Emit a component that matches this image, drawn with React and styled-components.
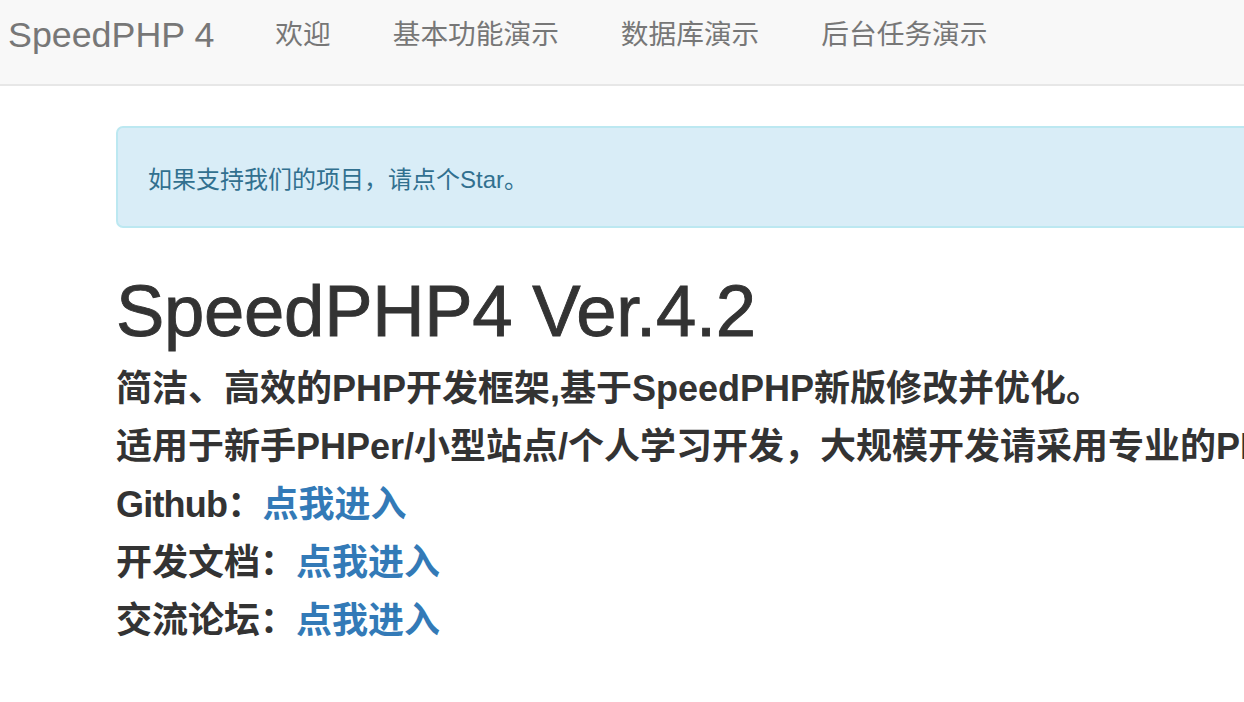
import React from "react";
import styled, { createGlobalStyle } from "styled-components";

const GlobalStyle = createGlobalStyle`
  html, body {
    margin: 0;
    padding: 0;
    background: #ffffff;
    overflow: hidden;
  }
  body {
    font-family: "Liberation Sans", "Noto Sans CJK SC", sans-serif;
    color: #333333;
  }
`;

const Navbar = styled.nav`
  display: flex;
  align-items: flex-start;
  height: 84px;
  padding-left: 8px;
  background: #f8f8f8;
  border-bottom: 2px solid #e7e7e7;
`;

const Brand = styled.a`
  font-size: 35.8px;
  line-height: 70px;
  color: #777777;
  padding-right: 30px;
  text-decoration: none;
  white-space: nowrap;
`;

const NavLink = styled.a`
  font-size: 27.7px;
  line-height: 70px;
  color: #777777;
  padding: 0 31px;
  text-decoration: none;
  white-space: nowrap;
`;

const Container = styled.main`
  width: 2000px;
  padding-left: 116px;
`;

const Alert = styled.div`
  margin-top: 40px;
  padding: 6px 30px 0;
  background: #d9edf7;
  border: 2px solid #bce8f1;
  border-radius: 7px;
  color: #31708f;
  font-size: 24px;
  line-height: 92px;
  white-space: nowrap;
`;

const Title = styled.h1`
  margin: 43px 0 9px;
  font-size: 72.5px;
  font-weight: 400;
  line-height: 80px;
  color: #333333;
  letter-spacing: -0.3px;
  -webkit-text-stroke: 0.9px #333333;
  white-space: nowrap;
`;

const Line = styled.div`
  font-size: 36px;
  font-weight: 700;
  line-height: 58px;
  color: #333333;
  white-space: nowrap;
`;

const Label = styled.span`
  letter-spacing: ${(p) => (p.$latin ? "-0.8px" : "0")};
`;

const Link = styled.a`
  color: #337ab7;
  text-decoration: none;
`;

const navItems = ["欢迎", "基本功能演示", "数据库演示", "后台任务演示"];

const links = [
  { label: "Github：", latin: true },
  { label: "开发文档：", latin: false },
  { label: "交流论坛：", latin: false },
];

export default function App() {
  return (
    <>
      <GlobalStyle />
      <Navbar>
        <Brand href="#">SpeedPHP 4</Brand>
        {navItems.map((item) => (
          <NavLink key={item} href="#">
            {item}
          </NavLink>
        ))}
      </Navbar>
      <Container>
        <Alert>如果支持我们的项目，请点个Star。</Alert>
        <Title>SpeedPHP4 Ver.4.2</Title>
        <Line>简洁、高效的PHP开发框架,基于SpeedPHP新版修改并优化。</Line>
        <Line>
          适用于新手PHPer/小型站点/个人学习开发，大规模开发请采用专业的PHP框架。
        </Line>
        {links.map((l) => (
          <Line key={l.label}>
            <Label $latin={l.latin}>{l.label}</Label>
            <Link href="#">点我进入</Link>
          </Line>
        ))}
      </Container>
    </>
  );
}
